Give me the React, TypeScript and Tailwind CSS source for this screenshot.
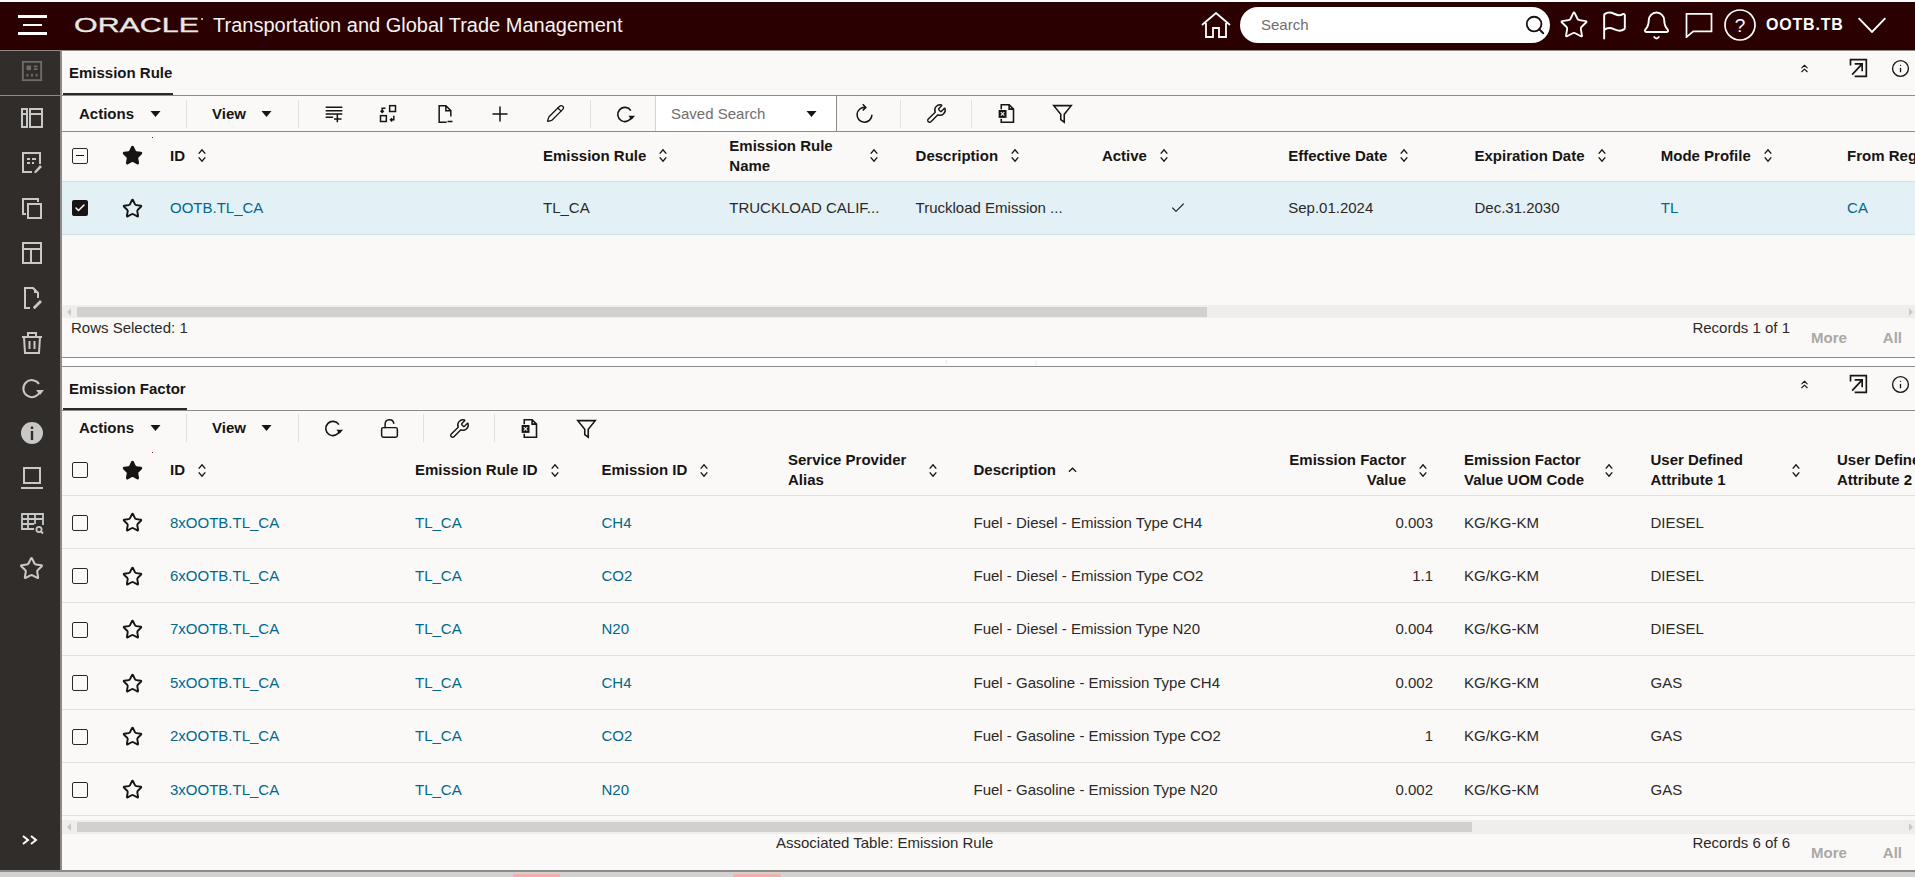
import * as React from 'react'
import { Star, Plus, Pencil, Wrench, LockOpen, Info, Search, Flag, Bell, ChevronsUp, Check } from 'lucide-react'

type IconProps = { className?: string }

function Svg({ className, sw = 1.8, children }: IconProps & { sw?: number; children: React.ReactNode }) {
  return (
    <svg viewBox="0 0 24 24" fill="none" stroke="currentColor" strokeWidth={sw} className={className}>
      {children}
    </svg>
  )
}

/* ─── Sidebar icons ─── */
const DashIcon = ({ className }: IconProps) => (
  <Svg className={className} sw={2}>
    <rect x="2" y="2" width="20" height="20" />
    <rect x="6" y="6" width="5" height="5" fill="currentColor" stroke="none" />
    <path d="M14 7h4M14 10h4M7 15v3M12 15v3M17 15v3" />
  </Svg>
)
const PanelIcon = ({ className }: IconProps) => (
  <Svg className={className} sw={2}>
    <path d="M2 3h5v18H2zM10 3h12v18H10zM2 8h5M10 8h12" />
  </Svg>
)
const FormEditIcon = ({ className }: IconProps) => (
  <Svg className={className} sw={2}>
    <path d="M12 21H3V2h17v11" />
    <path d="M7 8h3M12 8h4M7 12h3M12 12h2" />
    <path d="M15 22l-1-1 6-7 2 2-6 6z" fill="currentColor" stroke="none" />
  </Svg>
)
const CopyIcon = ({ className }: IconProps) => (
  <Svg className={className} sw={2}>
    <path d="M6 18H3V3h15v3" />
    <rect x="8" y="8" width="13" height="14" />
  </Svg>
)
const LayoutIcon = ({ className }: IconProps) => (
  <Svg className={className} sw={2}>
    <rect x="3" y="2" width="18" height="20" />
    <path d="M3 8h18M11 8v14" />
  </Svg>
)
const DocEditIcon = ({ className }: IconProps) => (
  <Svg className={className} sw={2}>
    <path d="M10 22H5V2h8l5 5v5" />
    <path d="M14 2v5h4" fill="currentColor" stroke="none" />
    <path d="M14 23l-1-2 7-7 2 2-7 7z" fill="currentColor" stroke="none" />
  </Svg>
)
const TrashIcon = ({ className }: IconProps) => (
  <Svg className={className} sw={2}>
    <path d="M2 6h20M8 6V2h8v4M4 6l1 16h14l1-16M9.5 10v8M14.5 10v8" />
  </Svg>
)
const RedoIcon = ({ className }: IconProps) => (
  <Svg className={className} sw={2}>
    <path d="M19 8a8.5 8.5 0 1 0 1 7" />
    <path d="M16 14h8l-4 5z" fill="currentColor" stroke="none" />
  </Svg>
)
const InfoFilled = ({ className }: IconProps) => (
  <svg viewBox="0 0 24 24" className={className}>
    <circle cx="12" cy="12" r="11" fill="currentColor" />
    <rect x="10.8" y="10" width="2.4" height="9" fill="#2f2c2a" />
    <rect x="10.8" y="5.5" width="2.4" height="2.4" fill="#2f2c2a" />
  </svg>
)
const LaptopIcon = ({ className }: IconProps) => (
  <Svg className={className} sw={2}>
    <rect x="4" y="2" width="16" height="15" />
    <path d="M1 22h22" />
  </Svg>
)
const TableSearchIcon = ({ className }: IconProps) => (
  <Svg className={className} sw={1.8}>
    <path d="M14 18H2V3h21v11M2 8h21M2 13h12M8 3v15M15 3v10" />
    <circle cx="19" cy="18.5" r="2.6" />
    <path d="M21 20.5l2 2" />
  </Svg>
)

/* ─── Toolbar icons ─── */
const AddRowIcon = ({ className }: IconProps) => (
  <Svg className={className} sw={1.8}>
    <path d="M2 4h20M2 8h20M2 12h20M2 16h9M16 13v9M12 18h9" />
  </Svg>
)
const SwapIcon = ({ className }: IconProps) => (
  <Svg className={className} sw={1.8}>
    <rect x="14" y="2" width="7" height="7" />
    <rect x="3" y="14" width="7" height="7" />
    <path d="M9 5H5v5M3 8l2 2 2-2M15 19h4v-5M17 17l-2 2 2 2" />
  </Svg>
)
const DocMinusIcon = ({ className }: IconProps) => (
  <Svg className={className} sw={1.8}>
    <path d="M14 22H5V2h8l6 6v7M13 2v6h6M15 21h6" />
  </Svg>
)
const RefreshIcon = ({ className }: IconProps) => (
  <Svg className={className} sw={1.8}>
    <path d="M13 5A8.5 8.5 0 1 0 20.5 13.5M10 1.5L13.5 5 10 8.5" />
  </Svg>
)
const ExportIcon = ({ className }: IconProps) => (
  <Svg className={className} sw={1.8}>
    <path d="M6 7V2h9l5 5v15H6v-4M15 2v5h5" />
    <rect x="3" y="8" width="9" height="9" fill="currentColor" stroke="none" />
    <path d="M5.5 10.5l4 4M9.5 10.5l-4 4" stroke="#fbf9f8" strokeWidth="1.2" />
  </Svg>
)
const FilterIcon = ({ className }: IconProps) => (
  <Svg className={className} sw={1.8}>
    <path d="M2 3h20l-8 10v9l-4-3v-6z" />
  </Svg>
)
const OpenIcon = ({ className }: IconProps) => (
  <Svg className={className} sw={2}>
    <path d="M3 9V2h19v20H8" />
    <path d="M5 20L17 7M8 7h9v9" />
  </Svg>
)
const SortIcon = () => (
  <svg viewBox="0 0 10 16" fill="none" stroke="#161513" strokeWidth="1.5" className="ml-3 w-[10px] h-[15px] shrink-0">
    <path d="M1.5 6L5 2l3.5 4M1.5 10L5 14l3.5-4" />
  </svg>
)
const Caret = ({ className = '' }: IconProps) => (
  <svg viewBox="0 0 10 6" className={`w-[11px] h-[6px] ${className}`}>
    <path d="M0 0h10L5 6z" fill="#161513" />
  </svg>
)

/* ─── Bits ─── */
function Box({ state }: { state?: 'partial' | 'checked' }) {
  if (state === 'checked') {
    return (
      <span className="w-[16px] h-[16px] rounded-[2px] bg-[#161513] flex items-center justify-center">
        <Check size={12} strokeWidth={3} className="text-white" />
      </span>
    )
  }
  return (
    <span className="w-[16px] h-[16px] rounded-[2px] border-[1.5px] border-[#2b2927] flex items-center justify-center bg-[#fbf9f8]">
      {state === 'partial' && <span className="w-[8px] h-[1.5px] bg-[#161513]" />}
    </span>
  )
}

function Lead({ box, filled }: { box?: 'partial' | 'checked'; filled?: boolean }) {
  return (
    <>
      <div className="w-[48px] shrink-0 pl-[10px] flex items-center"><Box state={box} /></div>
      <div className="w-[47px] shrink-0 pl-[12px] flex items-center">
        <Star size={21} strokeWidth={2.2} className="text-[#161513]" fill={filled ? '#161513' : 'none'} />
      </div>
    </>
  )
}

function Sep({ className = '' }: IconProps) {
  return <span className={`w-px h-[28px] bg-[#e2e1df] shrink-0 ${className}`} />
}

function Btn({ className = '', children }: IconProps & { children: React.ReactNode }) {
  return <span className={`w-[26px] h-[26px] flex items-center justify-center shrink-0 text-[#161513] ${className}`}>{children}</span>
}

function Tab({ label, rowClass, labelClass }: { label: string; rowClass: string; labelClass: string }) {
  return (
    <div className={`border-b border-[#8c8b89] flex items-start relative shrink-0 ${rowClass}`}>
      <span className={`ml-[1px] pl-[6px] pr-[1px] flex items-center whitespace-nowrap font-bold text-[15px] text-[#161513] border-b-2 border-[#2b2927] ${labelClass}`}>{label}</span>
      <div className="ml-auto pr-[5px] h-[34px] flex items-center">
        <ChevronsUp size={13} strokeWidth={2} className="text-[#161513] mr-[37px]" />
        <OpenIcon className="w-[20px] h-[20px] text-[#161513] mr-[23px]" />
        <Info size={19} strokeWidth={1.7} className="text-[#161513]" />
      </div>
    </div>
  )
}

function ActionsView() {
  return (
    <>
      <div className="w-[125px] shrink-0 pl-[17px] flex items-center h-[28px] border-r border-[#e2e1df] font-bold text-[15px] text-[#161513]">
        <span className="pt-[1px]">Actions</span> <Caret className="ml-[16px]" />
      </div>
      <div className="w-[112px] shrink-0 pl-[25px] flex items-center h-[28px] border-r border-[#e2e1df] font-bold text-[15px] text-[#161513]">
        <span className="pt-[1px]">View</span> <Caret className="ml-[15px]" />
      </div>
    </>
  )
}

function Footer({ left, leftClass, records, className }: { left: string; leftClass: string; records: string; className: string }) {
  return (
    <div className={`flex items-start text-[15px] text-[#2b2927] pr-[13px] shrink-0 ${className}`}>
      <span className={`leading-[20px] ${leftClass}`}>{left}</span>
      <span className="ml-auto leading-[20px]">{records}</span>
      <span className="ml-[21px] mt-[10px] leading-[20px] font-bold text-[#a9a8a6]">More</span>
      <span className="ml-[36px] mt-[10px] leading-[20px] font-bold text-[#a9a8a6]">All</span>
    </div>
  )
}

function Track({ thumb, className = '' }: { thumb: string; className?: string }) {
  return (
    <div className={`bg-[#efeeec] flex items-center pl-[15px] relative shrink-0 ${className}`}>
      <span className={`h-[10px] bg-[#d1d0ce] ${thumb}`} />
      <span className="absolute left-[5px] border-y-[4px] border-y-transparent border-r-[4px] border-r-[#c9c8c6]" />
      <span className="absolute right-[2px] border-y-[4px] border-y-transparent border-l-[4px] border-l-[#c9c8c6]" />
    </div>
  )
}

function Th({ w, children, wrap }: { w: string; children: React.ReactNode; wrap?: boolean }) {
  return (
    <div className={`${w} shrink-0 pl-[13px] flex items-center font-bold text-[15px] leading-[20px] text-[#161513]`}>
      <span className={wrap ? 'w-[128px] shrink-0' : 'whitespace-nowrap'}>{children}</span>
      <SortIcon />
    </div>
  )
}

function Td({ w, children, link, right }: { w: string; children?: React.ReactNode; link?: boolean; right?: boolean }) {
  return (
    <div className={`${w} shrink-0 pl-[13px] flex items-center text-[15px] whitespace-nowrap ${link ? 'text-[#00688c]' : 'text-[#2b2927]'} ${right ? 'justify-end pr-[18px]' : ''}`}>
      {children}
    </div>
  )
}

const SIDE_ICONS = [PanelIcon, FormEditIcon, CopyIcon, LayoutIcon, DocEditIcon, TrashIcon, RedoIcon, InfoFilled, LaptopIcon, TableSearchIcon]

const FACTORS = [
  ['8xOOTB.TL_CA', 'CH4', 'Fuel - Diesel - Emission Type CH4', '0.003', 'DIESEL'],
  ['6xOOTB.TL_CA', 'CO2', 'Fuel - Diesel - Emission Type CO2', '1.1', 'DIESEL'],
  ['7xOOTB.TL_CA', 'N20', 'Fuel - Diesel - Emission Type N20', '0.004', 'DIESEL'],
  ['5xOOTB.TL_CA', 'CH4', 'Fuel - Gasoline - Emission Type CH4', '0.002', 'GAS'],
  ['2xOOTB.TL_CA', 'CO2', 'Fuel - Gasoline - Emission Type CO2', '1', 'GAS'],
  ['3xOOTB.TL_CA', 'N20', 'Fuel - Gasoline - Emission Type N20', '0.002', 'GAS'],
]

export default function App() {
  return (
    <div className="w-[1915px] h-[877px] overflow-hidden flex flex-col bg-white font-['Liberation_Sans',Arial,sans-serif]">
      <div className="h-[2px] shrink-0 bg-white" />

      {/* ── Top bar ── */}
      <header className="h-[49px] shrink-0 pb-[2px] bg-[#2b0000] border-b border-[#8c8b89] flex items-center text-white">
        <div className="ml-[18px] w-[29px] flex flex-col gap-[6px]">
          <span className="h-[2.5px] w-[29px] bg-white" />
          <span className="h-[2.5px] w-[19px] ml-[5px] bg-white" />
          <span className="h-[2.5px] w-[29px] bg-white" />
        </div>
        <svg viewBox="0 0 130 20" className="ml-[27px] w-[130px] h-[20px] shrink-0" fill="#e9e8e6">
          <text x="0" y="17" fontSize="19.5" textLength="125" lengthAdjust="spacingAndGlyphs" stroke="#e9e8e6" strokeWidth="0.3" fontFamily="Liberation Sans">ORACLE</text>
          <circle cx="128" cy="4" r="1" />
        </svg>
        <span className="ml-[9px] text-[20px] whitespace-nowrap text-[#f5f4f2]">Transportation and Global Trade Management</span>

        <div className="ml-auto flex items-center">
          <svg viewBox="0 0 30 26" fill="none" stroke="currentColor" strokeWidth="1.8" className="w-[30px] h-[26px]">
            <path d="M1 13L15 1l14 12M5 11v14h7v-9h6v9h7V11" />
          </svg>
          <div className="ml-[9px] w-[310px] h-[36px] rounded-full bg-white flex items-center pl-[21px] pr-[4px] text-[15px] text-[#6f6e6c]">
            Search
            <Search size={22} strokeWidth={2} className="ml-auto text-[#161513]" />
          </div>
          <Star size={30} strokeWidth={1.5} className="ml-[9px]" />
          <Flag size={31} strokeWidth={1.5} className="ml-[10px]" />
          <Bell size={31} strokeWidth={1.5} className="ml-[11px]" />
          <svg viewBox="0 0 28 26" fill="none" stroke="currentColor" strokeWidth="1.8" className="ml-[13px] w-[28px] h-[25px]">
            <path d="M1 1h26v18H8l-7 6z" />
          </svg>
          <svg viewBox="0 0 32 32" fill="none" stroke="currentColor" strokeWidth="1.7" className="ml-[11px] w-[32px] h-[32px]">
            <circle cx="16" cy="16" r="15" />
            <text x="16" y="22.5" textAnchor="middle" fontSize="19" fill="currentColor" stroke="none" fontFamily="Liberation Sans">?</text>
          </svg>
          <span className="ml-[10px] w-[81px] font-bold text-[16px] tracking-[0.8px] whitespace-nowrap">OOTB.TB</span>
          <svg viewBox="0 0 27 15" fill="none" stroke="currentColor" strokeWidth="1.8" className="ml-[10px] mr-[28px] w-[30px] h-[16px]">
            <path d="M1 1l12.5 13L26 1" />
          </svg>
        </div>
      </header>

      <div className="flex-1 flex min-h-0">
        {/* ── Left rail ── */}
        <aside className="w-[62px] shrink-0 bg-[#312d2a] border-r-2 border-[#8c8b89] flex flex-col">
          <div className="h-[45px] shrink-0 pl-[3px] pb-[4px] border-b border-[#8c8b89] flex items-center justify-center">
            <DashIcon className="w-[22px] h-[22px] text-[#6f6d6b]" />
          </div>
          {SIDE_ICONS.map((Icon, i) => (
            <div key={i} className="h-[45px] shrink-0 pl-[3px] pb-[1px] flex items-center justify-center">
              <Icon className="w-[24px] h-[24px] text-[#c9c8c6]" />
            </div>
          ))}
          <div className="h-[45px] shrink-0 pl-[3px] flex items-center justify-center">
            <Star size={25} strokeWidth={2} className="text-[#c9c8c6]" />
          </div>
          <div className="mt-auto h-[30px] pl-[22px] flex items-center">
            <svg viewBox="0 0 16 10" fill="none" stroke="white" strokeWidth="2" className="w-[16px] h-[10px]">
              <path d="M1 1l5 4-5 4M9 1l5 4-5 4" />
            </svg>
          </div>
          <div className="h-[15px] shrink-0" />
        </aside>

        <main className="flex-1 min-w-0 flex flex-col bg-[#fbf9f8] overflow-hidden">
          {/* ── Emission Rule ── */}
          <Tab label="Emission Rule" rowClass="h-[45px]" labelClass="h-[44px] pt-[2px]" />
          <div className="h-[36px] shrink-0 border-b border-[#8c8b89] flex items-center">
            <ActionsView />
            <Btn className="ml-[22px]"><AddRowIcon className="w-[20px] h-[20px]" /></Btn>
            <Btn className="ml-[28px]"><SwapIcon className="w-[20px] h-[20px]" /></Btn>
            <Btn className="ml-[31px]"><DocMinusIcon className="w-[20px] h-[20px]" /></Btn>
            <Btn className="ml-[29px]"><Plus size={24} strokeWidth={1.5} /></Btn>
            <Btn className="ml-[29px]"><Pencil size={19} strokeWidth={1.6} /></Btn>
            <Sep className="ml-[22px]" />
            <Btn className="ml-[21px]"><RedoIcon className="w-[20px] h-[20px]" /></Btn>
            <div className="ml-[17px] w-[182px] h-[35px] self-start bg-white border-l border-[#d5d4d2] border-r border-r-[#8c8b89] flex items-center pl-[15px] pt-[1px] text-[15px] text-[#6f6e6c] shrink-0">
              Saved Search
              <Caret className="ml-auto mr-[19px]" />
            </div>
            <Btn className="ml-[14px]"><RefreshIcon className="w-[21px] h-[21px]" /></Btn>
            <Sep className="ml-[23px]" />
            <Btn className="ml-[22px]"><Wrench size={21} strokeWidth={1.6} /></Btn>
            <Sep className="ml-[22px]" />
            <Btn className="ml-[21px]"><ExportIcon className="w-[21px] h-[21px]" /></Btn>
            <Btn className="ml-[30px]"><FilterIcon className="w-[21px] h-[21px]" /></Btn>
          </div>

          <div className="h-[49px] shrink-0 pb-[2px] flex relative">
            <span className="absolute left-[90px] top-[5px] w-px h-px bg-[#7a1a1a]" />
            <Lead box="partial" filled />
            <Th w="w-[373px]">ID</Th>
            <Th w="w-[186.3px]">Emission Rule</Th>
            <Th w="w-[186.3px]" wrap>Emission Rule Name</Th>
            <Th w="w-[186.3px]">Description</Th>
            <Th w="w-[186.3px]">Active</Th>
            <Th w="w-[186.3px]">Effective Date</Th>
            <Th w="w-[186.3px]">Expiration Date</Th>
            <Th w="w-[186.3px]">Mode Profile</Th>
            <Th w="w-[186.3px]">From Region</Th>
          </div>
          <div className="h-[54px] shrink-0 flex bg-[#e3f0f6] border-y border-[#cfdfe8]">
            <Lead box="checked" />
            <Td w="w-[373px]" link>OOTB.TL_CA</Td>
            <Td w="w-[186.3px]">TL_CA</Td>
            <Td w="w-[186.3px]">TRUCKLOAD CALIF...</Td>
            <Td w="w-[186.3px]">Truckload Emission ...</Td>
            <Td w="w-[186.3px]"><Check size={16} strokeWidth={1.8} className="ml-[68px] text-[#2b2927]" /></Td>
            <Td w="w-[186.3px]">Sep.01.2024</Td>
            <Td w="w-[186.3px]">Dec.31.2030</Td>
            <Td w="w-[186.3px]" link>TL</Td>
            <Td w="w-[186.3px]" link>CA</Td>
          </div>
          <div className="h-[70px] shrink-0" />
          <Track thumb="w-[1130px]" className="h-[13px]" />
          <Footer left="Rows Selected: 1" leftClass="pl-[9px]" records="Records 1 of 1" className="h-[39px]" />

          {/* ── Splitter ── */}
          <div className="h-[10px] shrink-0 bg-white border-y border-[#8c8b89] flex items-center text-[9px] leading-none text-[#dddcda]">
            <span className="ml-[882px]">↑</span>
            <span className="ml-[85px]">↓</span>
          </div>

          {/* ── Emission Factor ── */}
          <Tab label="Emission Factor" rowClass="h-[44px]" labelClass="h-[43px] pt-[3px]" />
          <div className="h-[37px] shrink-0 pb-[3px] flex items-center">
            <ActionsView />
            <Btn className="ml-[21px]"><RedoIcon className="w-[20px] h-[20px]" /></Btn>
            <Btn className="ml-[30px]"><LockOpen size={21} strokeWidth={1.7} /></Btn>
            <Sep className="ml-[21px]" />
            <Btn className="ml-[22px]"><Wrench size={21} strokeWidth={1.6} /></Btn>
            <Sep className="ml-[22px]" />
            <Btn className="ml-[21px]"><ExportIcon className="w-[21px] h-[21px]" /></Btn>
            <Btn className="ml-[31px]"><FilterIcon className="w-[21px] h-[21px]" /></Btn>
          </div>

          <div className="h-[48px] shrink-0 pb-[3px] flex border-b border-[#e2e1df] relative">
            <span className="absolute left-[90px] top-[4px] w-px h-px bg-[#7a1a1a]" />
            <Lead filled />
            <Th w="w-[245px]">ID</Th>
            <Th w="w-[186.5px]">Emission Rule ID</Th>
            <Th w="w-[186.5px]">Emission ID</Th>
            <Th w="w-[185.5px]" wrap>Service Provider Alias</Th>
            <div className="w-[304px] shrink-0 pl-[13px] flex items-center font-bold text-[15px] text-[#161513]">
              Description
              <svg viewBox="0 0 10 6" fill="none" stroke="#161513" strokeWidth="1.4" className="ml-3 w-[9px] h-[6px]"><path d="M1 5l4-4 4 4" /></svg>
            </div>
            <div className="w-[186.5px] shrink-0 flex items-center justify-end pr-[23px] font-bold text-[15px] leading-[20px] text-[#161513] text-right">
              <span className="w-[128px]">Emission Factor Value</span>
              <SortIcon />
            </div>
            <Th w="w-[186.5px]" wrap>Emission Factor Value UOM Code</Th>
            <Th w="w-[186.5px]" wrap>User Defined Attribute 1</Th>
            <Th w="w-[186.5px]" wrap>User Defined Attribute 2</Th>
          </div>
          {FACTORS.map(f => (
            <div key={f[0]} className="h-[53.4px] shrink-0 pt-[1.5px] flex border-b border-[#e2e1df]">
              <Lead />
              <Td w="w-[245px]" link>{f[0]}</Td>
              <Td w="w-[186.5px]" link>TL_CA</Td>
              <Td w="w-[186.5px]" link>{f[1]}</Td>
              <Td w="w-[185.5px]" />
              <Td w="w-[304px]">{f[2]}</Td>
              <Td w="w-[186.5px]" right>{f[3]}</Td>
              <Td w="w-[186.5px]">KG/KG-KM</Td>
              <Td w="w-[186.5px]">{f[4]}</Td>
            </div>
          ))}
          <div className="h-[4px] shrink-0" />
          <Track thumb="w-[1395px]" className="h-[14px]" />
          <Footer left="Associated Table: Emission Rule" leftClass="pl-[714px]" records="Records 6 of 6" className="h-[37px] -mt-[1px]" />
        </main>
      </div>

      {/* ── Window bottom edge ── */}
      <div className="h-[7px] shrink-0 bg-[#d3d2d0] border-t-2 border-[#8c8b89] flex items-end">
        <span className="ml-[513px] w-[47px] h-[3px] bg-[#eeb0a8] rounded-t-[2px]" />
        <span className="ml-[173px] w-[48px] h-[3px] bg-[#eeb0a8] rounded-t-[2px]" />
      </div>
    </div>
  )
}
